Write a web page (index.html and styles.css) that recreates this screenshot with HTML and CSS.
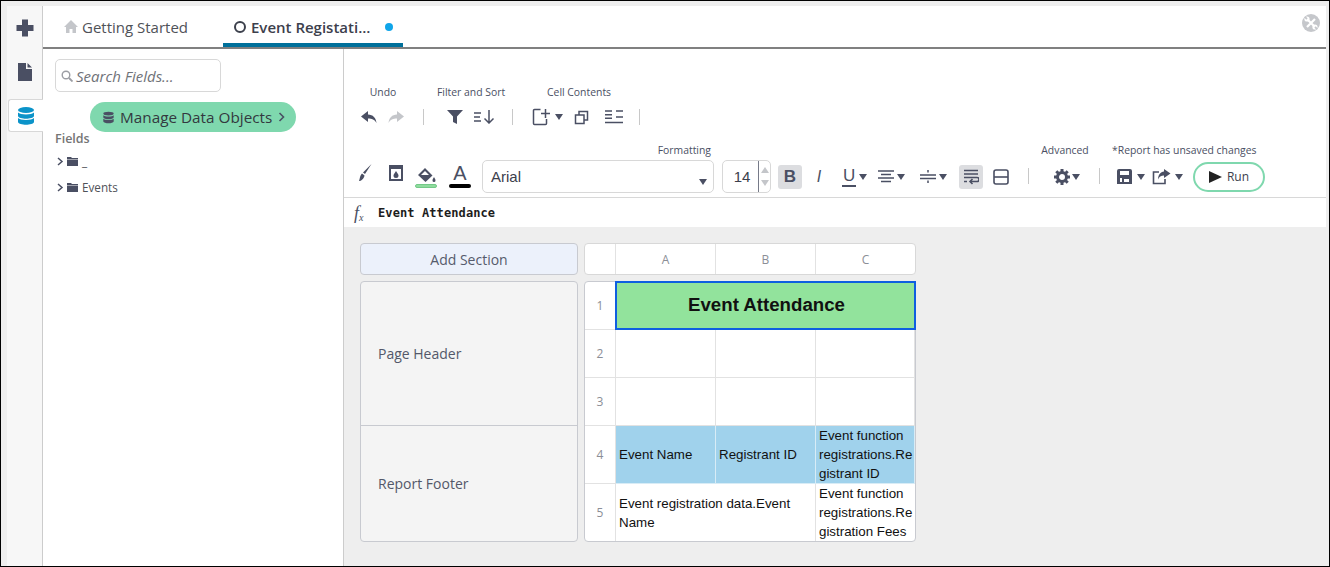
FILE: index.html
```html
<!DOCTYPE html>
<html lang="en">
<head>
    <meta charset="UTF-8">
    <title>Event Registration Report</title>
    <link rel="stylesheet" href="styles.css">
</head>
<body>
    <div class="frame">
        <nav class="rail">
            <div class="rail-item">
                <svg width="20" height="20" viewBox="0 0 20 20"><path class="ink" d="M7 1.500h6v5.500h5.500v6H13v5.500H7V13H1.500V7H7z"/></svg>
            </div>
            <div class="rail-item">
                <svg width="16" height="20" viewBox="0 0 16 20"><path class="ink" d="M1 1h8v6h6v12H1zM10.500 1l4.500 4.500h-4.500z"/></svg>
            </div>
            <div class="rail-item active">
                <svg width="18" height="20" viewBox="0 0 18 20"><ellipse class="blue" cx="9" cy="4" rx="8" ry="3"/><path class="blue" d="M1 6.500c2 2.600 14 2.600 16 0v3.500c-1 3.600-15 3.600-16 0zM1 12c2 2.600 14 2.600 16 0v4c-1 3.600-15 3.600-16 0z"/></svg>
            </div>
        </nav>

        <div class="main">
            <header class="tabs">
                <div class="tab">
                    <svg width="14" height="13" viewBox="0 0 14 13"><path fill="#c4c6ca" d="M7 0l7 7h-2v6H8.500V9h-3v4H2V7H0z"/></svg>
                    Getting Started
                </div>
                <div class="tab active">
                    <span class="ring"></span>
                    <span>Event Registati...</span>
                    <span class="dot"></span>
                </div>
                <div class="wrench">
                    <svg width="18" height="18" viewBox="0 0 18 18"><circle cx="9" cy="9" r="9" fill="#c5c7cb"/><path fill="none" stroke="#fff" stroke-width="2.200" d="M6 6l6.500 6.500M13 5L5 13"/><circle cx="5" cy="5" r="2.600" fill="#fff"/><circle cx="13" cy="13" r="2.600" fill="#fff"/><path stroke="#c5c7cb" stroke-width="1.800" d="M2.800 2.800L5 5M15.200 15.200L13 13"/></svg>
                </div>
            </header>

            <div class="workspace">
                <aside class="fields">
                    <div class="search">
                        <svg width="12" height="12" viewBox="0 0 12 12"><circle cx="5" cy="5" r="3.800" fill="none" stroke="#9b9da3" stroke-width="1.400"/><path stroke="#9b9da3" stroke-width="1.800" d="M8 8l3.500 3.500"/></svg>
                        <span>Search Fields...</span>
                    </div>
                    <button class="manage">
                        <svg width="13" height="13" viewBox="0 0 18 20"><ellipse class="ink" cx="9" cy="4" rx="8" ry="3"/><path class="ink" d="M1 6.500c2 2.600 14 2.600 16 0v3.500c-1 3.600-15 3.600-16 0zM1 12c2 2.600 14 2.600 16 0v4c-1 3.600-15 3.600-16 0z"/></svg>
                        Manage Data Objects
                        <svg width="7" height="10" viewBox="0 0 7 10"><path fill="none" stroke="#4a4f63" stroke-width="1.600" d="M1.500 1l4 4-4 4"/></svg>
                    </button>
                    <div class="fields-title">Fields</div>
                    <div class="tree-row">
                        <svg width="7" height="9" viewBox="0 0 7 9"><path fill="none" stroke="#4a4f63" stroke-width="1.500" d="M1 1l4 3.500L1 8"/></svg>
                        <svg width="11" height="9" viewBox="0 0 11 9"><path class="ink" d="M0 0h4l1 1h6v1.500H0zM0 3h11v6H0z"/></svg>
                        <span>_</span>
                    </div>
                    <div class="tree-row">
                        <svg width="7" height="9" viewBox="0 0 7 9"><path fill="none" stroke="#4a4f63" stroke-width="1.500" d="M1 1l4 3.500L1 8"/></svg>
                        <svg width="11" height="9" viewBox="0 0 11 9"><path class="ink" d="M0 0h4l1 1h6v1.500H0zM0 3h11v6H0z"/></svg>
                        <span>Events</span>
                    </div>
                </aside>

                <section class="editor">
                    <div class="toolbar">
                        <div class="tool-row row-one">
                            <div class="group undo">
                                <div class="group-label">Undo</div>
                                <div class="icons">
                                    <svg width="18" height="14" viewBox="0 0 18 14"><path class="ink" d="M8 1L1 6.500 8 12V8.500c4 0 6.500 1 8.500 4.500C16 8 13 4.500 8 4.500z"/></svg>
                                    <svg width="18" height="14" viewBox="0 0 18 14"><path fill="#c4c6ca" d="M10 1l7 5.500L10 12V8.500c-4 0-6.500 1-8.500 4.500C2 8 5 4.500 10 4.500z"/></svg>
                                </div>
                            </div>
                            <i class="sep"></i>
                            <div class="group filter">
                                <div class="group-label">Filter and Sort</div>
                                <div class="icons">
                                    <svg width="16" height="14" viewBox="0 0 16 14"><path class="ink" d="M0 0h16l-6 6.500V14l-4-2V6.500z"/></svg>
                                    <svg width="22" height="14" viewBox="0 0 22 14"><path fill="none" stroke="#4a4f63" stroke-width="1.500" d="M0 3h7M0 7h6M0 11h7M15 0v13M10.500 8.500l4.500 4.500 4.500-4.500"/></svg>
                                </div>
                            </div>
                            <i class="sep"></i>
                            <div class="group contents">
                                <div class="group-label">Cell Contents</div>
                                <div class="icons">
                                    <svg width="20" height="18" viewBox="0 0 19 18"><path fill="none" stroke="#4a4f63" stroke-width="1.500" d="M8 1.500H2A1 1 0 0 0 1 2.500v13a1 1 0 0 0 1 1h11a1 1 0 0 0 1-1V11M13 1v9M8.500 5.500h9"/></svg>
                                    <span class="caret"></span>
                                    <svg class="copy" width="15" height="15" viewBox="0 0 15 15"><path fill="none" stroke="#4a4f63" stroke-width="1.500" d="M5 5V1.500h8.500V10H10M1.500 5H10v8.500H1.500z"/></svg>
                                    <svg class="lines" width="18" height="14" viewBox="0 0 18 14"><path fill="none" stroke="#4a4f63" stroke-width="1.600" d="M0 1h7M11 1h7M0 4.700h7M0 8.300h7M11 7h7M0 12.500h18"/></svg>
                                </div>
                            </div>
                            <i class="sep"></i>
                        </div>

                        <div class="tool-row row-two">
                            <div class="icons brush-set">
                                <svg width="14" height="18" viewBox="0 0 14 18"><path class="ink" d="M13.500 0L7 10l-2-1.500zM4 9.500l2.500 2C6 15 3 17 1 17c1-2 .5-5 3-7.500z"/></svg>
                                <svg class="doc-drop" width="16" height="18" viewBox="0 0 16 18"><path class="ink" fill-rule="evenodd" d="M1 1h14v16H1zM3 5v10h10V5zM8 7c1 2 2.500 3 2.500 4.500a2.500 2.500 0 0 1-5 0C5.500 10 7 9 8 7z"/></svg>
                                <span class="colour-tool">
                                    <svg width="20" height="16" viewBox="0 0 20 16"><path class="ink" d="M9 1l7.500 7.500L9.500 15 2 8zM9 4L5 8h8zM18 10c.7 1.500 1.500 2.200 1.500 3.500a1.500 1.500 0 0 1-3 0c0-1.300.8-2 1.500-3.500z"/></svg>
                                    <i class="swatch green"></i>
                                </span>
                                <span class="colour-tool">
                                    <span class="letter-a">A</span>
                                    <i class="swatch black"></i>
                                </span>
                            </div>
                            <div class="group font-group">
                                <div class="group-label">Formatting</div>
                                <div class="font-select">Arial<span class="caret"></span></div>
                            </div>
                            <div class="size-box">
                                <span class="size-value">14</span>
                                <span class="spin"><i class="up"></i><i class="down"></i></span>
                            </div>
                            <div class="icons format-set">
                                <span class="toggle on bold">B</span>
                                <span class="toggle italic">I</span>
                                <span class="with-caret underline"><span class="u">U</span><span class="caret"></span></span>
                                <span class="with-caret align">
                                    <svg width="16" height="13" viewBox="0 0 16 13"><path fill="none" stroke="#4a4f63" stroke-width="1.600" d="M0 1h16M3 4.500h10M0 8h16M3 11.500h10"/></svg>
                                    <span class="caret"></span>
                                </span>
                                <span class="with-caret valign">
                                    <svg width="16" height="13" viewBox="0 0 16 13"><path fill="none" stroke="#4a4f63" stroke-width="1.500" d="M0 5h16M0 8.500h16M8 0v2.500M8 10.500V13"/></svg>
                                    <span class="caret"></span>
                                </span>
                                <span class="toggle on">
                                    <svg width="16" height="16" viewBox="0 0 16 16"><path fill="none" stroke="#4a4f63" stroke-width="1.600" d="M1 1.500h14M1 5h14M1 8.500h13a1.800 1.800 0 0 1 0 4H7M9.500 10L7 12.500l2.500 2.500M1 12.500h3"/></svg>
                                </span>
                                <span class="toggle">
                                    <svg width="16" height="16" viewBox="0 0 16 16"><rect x="1" y="1" width="14" height="14" rx="2" fill="none" stroke="#4a4f63" stroke-width="1.600"/><path stroke="#4a4f63" stroke-width="1.600" d="M1 8h14"/></svg>
                                </span>
                            </div>
                            <i class="sep"></i>
                            <div class="group advanced">
                                <div class="group-label">Advanced</div>
                                <div class="icons">
                                    <svg width="16" height="16" viewBox="0 0 16 16"><circle cx="8" cy="8" r="4.500" fill="none" stroke="#4a4f63" stroke-width="3"/><path fill="none" stroke="#4a4f63" stroke-width="3" d="M8 0v3M8 13v3M0 8h3M13 8h3M2.300 2.300l2 2M11.700 11.700l2 2M13.700 2.300l-2 2M4.300 11.700l-2 2"/></svg>
                                    <span class="caret"></span>
                                </div>
                            </div>
                            <i class="sep"></i>
                            <div class="group run-group">
                                <div class="group-label">*Report has unsaved changes</div>
                                <div class="icons">
                                    <svg width="15" height="15" viewBox="0 0 15 15"><path class="ink" fill-rule="evenodd" d="M2 0h11a2 2 0 0 1 2 2v13H0V2a2 2 0 0 1 2-2zM3 2v4h9V2zM3 9v4h2V9zM7 10v3h5v-3z"/></svg>
                                    <span class="caret"></span>
                                    <svg class="share" width="19" height="16" viewBox="0 0 19 16"><path fill="none" stroke="#4a4f63" stroke-width="1.600" d="M7 3H1.500v11.500H13V10"/><path class="ink" d="M12 0l6.500 4.500L12 9V6.500C9 6.500 7 8 6 10.500 6 6 8.500 3 12 2.500z"/></svg>
                                    <span class="caret"></span>
                                    <button class="run"><i class="play"></i>Run</button>
                                </div>
                            </div>
                        </div>
                    </div>

                    <div class="formula">
                        <span class="fx">f<sub>x</sub></span>
                        <span class="formula-text">Event Attendance</span>
                    </div>

                    <div class="canvas">
                        <div class="sections">
                            <div class="add-section">Add Section</div>
                            <div class="section-list">
                                <div class="section page-header">Page Header</div>
                                <div class="section report-footer">Report Footer</div>
                            </div>
                        </div>
                        <div class="sheet-wrap">
                            <div class="col-heads">
                                <div class="corner"></div>
                                <div class="col-head">A</div>
                                <div class="col-head">B</div>
                                <div class="col-head">C</div>
                            </div>
                            <div class="sheet">
                                <div class="row-no r1">1</div>
                                <div class="cell title selected">Event Attendance</div>
                                <div class="row-no r2">2</div>
                                <div class="cell"></div>
                                <div class="cell"></div>
                                <div class="cell"></div>
                                <div class="row-no r3">3</div>
                                <div class="cell"></div>
                                <div class="cell"></div>
                                <div class="cell"></div>
                                <div class="row-no r4">4</div>
                                <div class="cell head">Event Name</div>
                                <div class="cell head">Registrant ID</div>
                                <div class="cell head">Event function registrations.Registrant ID</div>
                                <div class="row-no r5">5</div>
                                <div class="cell span-two">Event registration data.Event Name</div>
                                <div class="cell">Event function registrations.Registration Fees</div>
                            </div>
                        </div>
                    </div>
                </section>
            </div>
        </div>
    </div>
</body>
</html>
```

FILE: styles.css
```css
* {
    box-sizing: border-box;
}
html, body {
    margin: 0;
    height: 100%;
    overflow: hidden;
}
body {
    font-family: "Open Sans", sans-serif;
    color: #4a4f63;
}
.ink {
    fill: #4a4f63;
}
.blue {
    fill: #0b93c9;
}
.frame {
    display: flex;
    width: 1330px;
    height: 567px;
    border: 1px solid #000;
    padding: 5px 3px 0 6px;
    background-color: #eeeeee;
}

/* left rail */
.rail {
    width: 36px;
    flex: none;
    padding-left: 1px;
    background-color: #f7f7f7;
    border-right: 1px solid #cccccc;
    display: flex;
    flex-direction: column;
    align-items: center;
}
.rail-item {
    width: 35px;
    height: 44px;
    display: flex;
    justify-content: center;
    align-items: center;
}
.rail-item.active {
    height: 33px;
    margin: 5px -1px 0 0;
    width: 36px;
    background-color: #fff;
    border: 1px solid #d8d8d8;
    border-right: none;
    border-radius: 3px 0 0 3px;
}

.main {
    flex: 1;
    min-width: 0;
    display: flex;
    flex-direction: column;
    background-color: #fff;
}

/* tabs */
.tabs {
    height: 43px;
    flex: none;
    display: flex;
    align-items: stretch;
    border-bottom: 2px solid #808080;
    padding-left: 21px;
}
.tab {
    display: flex;
    align-items: center;
    gap: 4px;
    font-size: 15px;
    width: 159px;
    color: #4f5258;
}
.tab.active {
    width: 180px;
    padding: 5px 0 0 11px;
    gap: 5px;
    color: #3c404c;
    font-weight: 600;
    border-bottom: 4px solid #00709b;
}
.ring {
    width: 12px;
    height: 12px;
    border: 2.500px solid #3c404c;
    border-radius: 50%;
}
.dot {
    width: 8px;
    height: 8px;
    margin-left: 10px;
    background-color: #0fa5e9;
    border-radius: 50%;
}
.wrench {
    margin-left: auto;
    padding: 8px 6px 0 0;
}

.workspace {
    flex: 1;
    display: flex;
    min-height: 0;
}

/* fields panel */
.fields {
    width: 301px;
    flex: none;
    border-right: 1px solid #cccccc;
    padding: 10px 0 0 12px;
}
.search {
    width: 166px;
    height: 33px;
    display: flex;
    align-items: center;
    gap: 3px;
    padding-left: 5px;
    border: 1px solid #d8d8d8;
    border-radius: 5px;
    font-size: 15px;
    font-style: italic;
    color: #6f7278;
}
.manage {
    display: flex;
    align-items: center;
    gap: 5px;
    width: 206px;
    height: 30px;
    margin: 10px 0 0 35px;
    padding: 0 0 0 12px;
    border: none;
    border-radius: 15px;
    background-color: #7fd8ae;
    font-family: inherit;
    font-size: 15.300px;
    color: #33393f;
}
.manage svg:last-child {
    margin-left: 1px;
}
.fields-title {
    margin-top: -2px;
    font-size: 12.500px;
    font-weight: 600;
    color: #757575;
    line-height: 18px;
}
.tree-row {
    height: 26px;
    display: flex;
    align-items: center;
    gap: 3px;
    padding-left: 2px;
    font-size: 11.700px;
    color: #4f5258;
}
.tree-row svg:nth-child(2) {
    margin-right: 1px;
}

/* toolbar */
.editor {
    flex: 1;
    min-width: 0;
    display: flex;
    flex-direction: column;
}
.toolbar {
    height: 149px;
    flex: none;
    border-bottom: 1px solid #d8d8d8;
    padding-top: 37px;
}
.tool-row {
    display: flex;
    align-items: flex-end;
}
.row-one {
    height: 49px;
    padding-left: 16px;
}
.row-two {
    height: 49px;
    margin-top: 9px;
    padding-left: 14px;
}
.group-label {
    font-size: 10.400px;
    line-height: 13px;
    text-align: center;
    white-space: nowrap;
    color: #4a4f63;
}
.icons {
    display: flex;
    align-items: center;
}
.sep {
    width: 1px;
    height: 16px;
    flex: none;
    background-color: #c8c8c8;
}
.row-one .icons {
    height: 36px;
}
.row-one .sep {
    margin-bottom: 10px;
}
.undo {
    width: 46px;
    margin-right: 17px;
}
.undo .icons {
    gap: 9px;
}
.filter {
    width: 70px;
    margin: 0 6px 0 12px;
}
.filter .icons {
    gap: 11px;
    padding-left: 11px;
}
.contents {
    width: 91px;
    margin: 0 16px 0 19px;
}
.contents .group-label {
    padding-left: 15px;
    text-align: left;
}
.contents .copy {
    margin-left: 11px;
}
.contents .lines {
    margin-left: 16px;
}
.contents .caret {
    margin-left: 3px;
}
.caret {
    display: inline-block;
    flex: none;
    width: 0;
    height: 0;
    border-left: 4.500px solid transparent;
    border-right: 4.500px solid transparent;
    border-top: 6px solid #4a4f63;
}

/* second row */
.brush-set {
    width: 124px;
    height: 32px;
    margin-bottom: 4px;
}
.doc-drop {
    margin-left: 16px;
}
.colour-tool {
    width: 24px;
    height: 30px;
    margin-left: 10px;
    display: flex;
    flex-direction: column;
    align-items: center;
    justify-content: flex-end;
}
.swatch {
    width: 22px;
    height: 4px;
    border-radius: 2px;
    margin-top: 1px;
}
.swatch.green {
    background-color: #8fdc9e;
    border: 1px solid #74c988;
}
.swatch.black {
    background-color: #000;
}
.letter-a {
    font-family: "Liberation Sans", sans-serif;
    font-size: 20px;
    line-height: 20px;
    color: #4a4f63;
}
.font-group {
    width: 232px;
}
.font-group .group-label {
    text-align: right;
    padding-right: 3px;
    margin-bottom: 3px;
}
.font-select {
    position: relative;
    height: 33px;
    border: 1px solid #d8d8d8;
    border-radius: 5px;
    padding-left: 8px;
    font-family: "Liberation Sans", sans-serif;
    font-size: 15px;
    line-height: 31px;
    color: #3c404c;
}
.font-select .caret {
    position: absolute;
    right: 6px;
    top: 18px;
}
.size-box {
    width: 49px;
    height: 33px;
    margin-left: 8px;
    display: flex;
    border: 1px solid #d8d8d8;
    border-radius: 5px;
    font-family: "Liberation Sans", sans-serif;
    font-size: 15px;
    color: #3c404c;
}
.size-value {
    flex: 1;
    text-align: center;
    line-height: 31px;
    padding-left: 3px;
}
.spin {
    width: 12px;
    border-left: 1px solid #767a88;
    display: flex;
    flex-direction: column;
    justify-content: space-around;
    align-items: center;
    padding: 2px 0;
}
.spin .up, .spin .down {
    width: 0;
    height: 0;
    border-left: 4px solid transparent;
    border-right: 4px solid transparent;
}
.spin .up {
    border-bottom: 6px solid #c4c6ca;
}
.spin .down {
    border-top: 6px solid #c4c6ca;
}
.format-set {
    height: 33px;
    margin-left: 7px;
    width: 250px;
}
.toggle {
    width: 24px;
    height: 24px;
    flex: none;
    display: flex;
    justify-content: center;
    align-items: center;
    border-radius: 3px;
    font-family: "Liberation Sans", sans-serif;
    font-size: 17px;
}
.toggle.on {
    background-color: #dcdde0;
}
.toggle.bold {
    font-weight: 700;
}
.toggle.italic {
    font-style: italic;
    font-weight: 400;
    margin: 0 11px 0 5px;
    font-size: 16px;
}
.with-caret {
    display: flex;
    align-items: center;
    gap: 3px;
}
.underline {
    margin-right: 11px;
    font-family: "Liberation Sans", sans-serif;
    font-size: 17px;
}
.underline .u {
    border-bottom: 2px solid #4a4f63;
    line-height: 18px;
    padding: 0 1px;
}
.align {
    margin-right: 15px;
}
.valign {
    margin-right: 12px;
}
.format-set .toggle:last-child {
    margin-left: 6px;
}
.row-two > .sep {
    margin-bottom: 9px;
}
.advanced {
    width: 48px;
    margin: 0 10px 0 12px;
}
.advanced .icons {
    height: 33px;
    gap: 2px;
    padding-left: 13px;
}
.run-group {
    margin-left: 12px;
    width: 154px;
}
.run-group .group-label {
    text-align: left;
    margin-bottom: 3px;
}
.advanced .group-label {
    margin-bottom: 3px;
}
.run-group .icons {
    height: 33px;
    padding-left: 5px;
}
.run-group .caret {
    margin-left: 5px;
}
.run-group .share {
    margin-left: 7px;
}
.run-group .share + .caret {
    margin-left: 4px;
}
.run {
    display: flex;
    align-items: center;
    justify-content: center;
    gap: 5px;
    width: 72px;
    height: 30px;
    margin-left: 10px;
    flex: none;
    background-color: #fff;
    border: 2px solid #7fd8ae;
    border-radius: 15px;
    font-family: inherit;
    font-size: 12px;
    color: #3c404c;
}
.play {
    width: 0;
    height: 0;
    border-top: 6.500px solid transparent;
    border-bottom: 6.500px solid transparent;
    border-left: 13px solid #222;
}

/* formula bar */
.formula {
    height: 29px;
    flex: none;
    display: flex;
    align-items: center;
    gap: 10px;
    padding-left: 10px;
}
.fx {
    font-family: "Liberation Serif", serif;
    font-style: italic;
    font-size: 18px;
    width: 14px;
    line-height: 20px;
}
.fx sub {
    font-size: 10px;
    line-height: 0;
    vertical-align: -2px;
}
.formula-text {
    font-family: "DejaVu Sans Mono", monospace;
    font-size: 12px;
    letter-spacing: .1px;
    font-weight: 700;
    color: #1d1d1d;
}

/* report canvas */
.canvas {
    flex: 1;
    display: flex;
    gap: 6px;
    padding: 16px 0 0 16px;
    background-color: #eeeeee;
}
.sections {
    width: 218px;
    display: flex;
    flex-direction: column;
    gap: 6px;
}
.add-section {
    height: 32px;
    display: flex;
    justify-content: center;
    align-items: center;
    background-color: #ecf1fb;
    border: 1px solid #c8cad0;
    border-radius: 4px;
    font-size: 14px;
    color: #565b6b;
}
.section-list {
    height: 261px;
    display: flex;
    flex-direction: column;
    background-color: #f4f4f4;
    border: 1px solid #c8cad0;
    border-radius: 4px;
}
.section {
    display: flex;
    align-items: center;
    padding-left: 17px;
    font-size: 14px;
    color: #535869;
}
.page-header {
    height: 144px;
    border-bottom: 1px solid #c8cad0;
}
.report-footer {
    flex: 1;
}
.sheet-wrap {
    width: 332px;
    display: flex;
    flex-direction: column;
    gap: 6px;
}
.col-heads {
    height: 32px;
    display: grid;
    grid-template-columns: 31px 100px 100px 1fr;
    background-color: #fff;
    border: 1px solid #d8d8d8;
    border-radius: 4px;
}
.corner, .col-head {
    border-right: 1px solid #e2e2e2;
}
.col-head {
    display: flex;
    justify-content: center;
    align-items: center;
    font-size: 12px;
    color: #8b8e96;
}
.col-head:last-child {
    border-right: none;
}
.sheet {
    height: 261px;
    display: grid;
    grid-template-columns: 31px 100px 100px 1fr;
    grid-template-rows: 48px 48px 48px 58px 57px;
    background-color: #fff;
    border: 1px solid #c8cad0;
    border-radius: 4px;
    font-family: "Liberation Sans", sans-serif;
    font-size: 13.330px;
    line-height: 19px;
    color: #111;
}
.row-no {
    display: flex;
    justify-content: center;
    align-items: center;
    font-family: "Open Sans", sans-serif;
    font-size: 12px;
    color: #8b8e96;
    border-right: 1px solid #e2e2e2;
    border-bottom: 1px solid #e2e2e2;
}
.row-no:nth-last-child(3) {
    border-bottom: none;
}
.cell {
    display: flex;
    align-items: center;
    padding: 0 0 0 3px;
    border-right: 1px solid #e2e2e2;
    border-bottom: 1px solid #e2e2e2;
    overflow-wrap: anywhere;
}
.cell:nth-last-child(-n+2) {
    border-bottom: none;
}
.cell:last-child {
    border-right: none;
}
.title {
    grid-column: span 3;
    justify-content: center;
    background-color: #92e39c;
    font-size: 18.670px;
    font-weight: 700;
    padding: 0 0 2px 2px;
}
.selected {
    border: 2px solid #0f5fe0;
    margin: -1px -1px 0 -1px;
}
.head {
    background-color: #a0d2ec;
    border-color: #d8ecf6;
}
.span-two {
    grid-column: span 2;
}
```
